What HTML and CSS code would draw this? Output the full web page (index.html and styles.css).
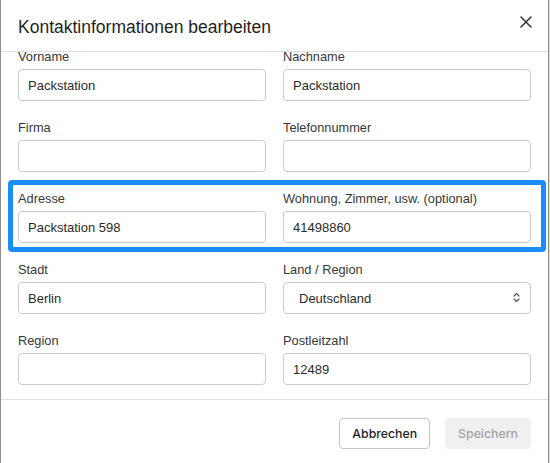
FILE: index.html
```html
<!DOCTYPE html>
<html lang="de">
<head>
<meta charset="utf-8">
<title>Kontaktinformationen bearbeiten</title>
<link rel="stylesheet" href="styles.css">
</head>
<body>
<div class="modal">
  <header class="modal-header">
    <h1 class="modal-title">Kontaktinformationen bearbeiten</h1>
    <button class="close" type="button" aria-label="Schließen">
      <svg width="12" height="12" viewBox="0 0 12 12"><path d="M1 1L11 11M11 1L1 11" stroke="#333" stroke-width="1.5" stroke-linecap="round" fill="none"/></svg>
    </button>
  </header>
  <div class="modal-body">
    <form class="form">
      <div class="row">
        <div class="field"><label class="label">Vorname</label><input class="input" value="Packstation"></div>
        <div class="field"><label class="label">Nachname</label><input class="input" value="Packstation"></div>
      </div>
      <div class="row">
        <div class="field"><label class="label">Firma</label><input class="input" value=""></div>
        <div class="field"><label class="label">Telefonnummer</label><input class="input" value=""></div>
      </div>
      <div class="row row-highlight">
        <div class="highlight"></div>
        <div class="field"><label class="label">Adresse</label><input class="input" value="Packstation 598"></div>
        <div class="field"><label class="label">Wohnung, Zimmer, usw. (optional)</label><input class="input" value="41498860"></div>
      </div>
      <div class="row">
        <div class="field"><label class="label">Stadt</label><input class="input" value="Berlin"></div>
        <div class="field"><label class="label">Land / Region</label>
          <div class="select-wrap">
            <select class="input select"><option>Deutschland</option></select>
            <svg class="select-arrow" width="7" height="11" viewBox="0 0 7 11"><path d="M1 4L3.5 1.5L6 4M1 7L3.5 9.5L6 7" stroke="#555" stroke-width="1.2" fill="none" stroke-linecap="round" stroke-linejoin="round"/></svg>
          </div>
        </div>
      </div>
      <div class="row">
        <div class="field"><label class="label">Region</label><input class="input" value=""></div>
        <div class="field"><label class="label">Postleitzahl</label><input class="input" value="12489"></div>
      </div>
    </form>
  </div>
  <footer class="modal-footer">
    <button class="btn btn-secondary" type="button">Abbrechen</button>
    <button class="btn btn-disabled" type="button">Speichern</button>
  </footer>
</div>
</body>
</html>
```

FILE: styles.css
```css
* { box-sizing: border-box; }

html, body {
  margin: 0;
  padding: 0;
  background: #dcdcdc;
  height: 100%;
  overflow: hidden;
}

body {
  font-family: "Liberation Sans", Arial, sans-serif;
  color: #2b2b2b;
}

.modal {
  width: 549px;
  height: 463px;
  background: #fff;
  border-left: 1px solid #8e8e8e;
  border-right: 1px solid #8e8e8e;
  display: flex;
  flex-direction: column;
}

.modal-header {
  height: 52px;
  flex: none;
  display: flex;
  align-items: flex-start;
  padding: 15px 16px 0 17px;
  border-bottom: 1px solid #dedede;
}

.modal-title {
  margin: 0;
  font-size: 17.5px;
  line-height: 24px;
  font-weight: 400;
  color: #1f1f1f;
}

.close {
  margin-left: auto;
  margin-top: 1px;
  padding: 0;
  border: 0;
  background: none;
  width: 12px;
  height: 12px;
  display: block;
}
.close svg { display: block; }

.modal-body {
  height: 347px;
  flex: none;
  overflow: hidden;
  padding: 0 17px;
}

.form {
  margin-top: -4px;
  display: flex;
  flex-direction: column;
  gap: 18px;
}

.row {
  display: grid;
  grid-template-columns: 1fr 1fr;
  column-gap: 17px;
}

.row-highlight { position: relative; }

.highlight {
  position: absolute;
  top: -10px;
  bottom: -9px;
  left: -10px;
  right: -15px;
  border: 5px solid #1a8cfb;
  border-radius: 4px;
  pointer-events: none;
}

.field {
  display: flex;
  flex-direction: column;
}

.label {
  display: block;
  font-size: 12.8px;
  line-height: 18px;
  margin-bottom: 3px;
  color: #383838;
  white-space: nowrap;
}

.input {
  height: 32px;
  width: 100%;
  border: 1px solid #cbcbcb;
  border-radius: 4px;
  padding: 0 9px;
  font-family: "Liberation Sans", Arial, sans-serif;
  font-size: 13px;
  color: #2b2b2b;
  background: #fff;
  outline: none;
}

.select-wrap { position: relative; }

.select {
  -webkit-appearance: none;
  appearance: none;
  padding-left: 15px;
}

.select-arrow {
  position: absolute;
  right: 11px;
  top: 10px;
  pointer-events: none;
}

.modal-footer {
  flex: none;
  border-top: 1px solid #dedede;
  padding: 18px 17px 0;
  display: flex;
  justify-content: flex-end;
  gap: 15px;
}

.btn {
  height: 31px;
  padding: 0 12px;
  border-radius: 4px;
  font-family: Inter, "Liberation Sans", sans-serif;
  font-size: 12.3px;
  font-weight: 500;
}

.btn-secondary {
  background: #fff;
  border: 1px solid #c4c4c4;
  color: #1f1f1f;
}

.btn-disabled {
  background: #f0f0f0;
  border: 1px solid #f0f0f0;
  color: #a3a3a3;
}
```
